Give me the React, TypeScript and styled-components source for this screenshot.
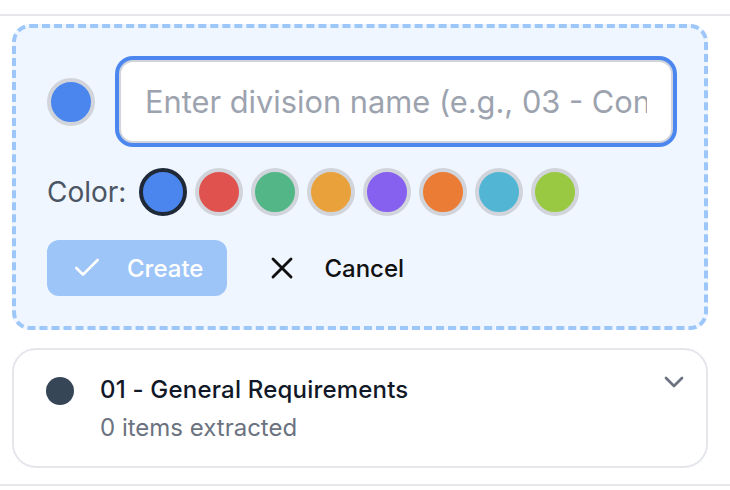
import React from "react";
import styled, { createGlobalStyle } from "styled-components";

const Global = createGlobalStyle`
  html, body { margin: 0; padding: 0; background: #ffffff; }
  body { font-family: Inter, "Noto Sans", "Liberation Sans", sans-serif; -webkit-font-smoothing: antialiased; }
  * { box-sizing: border-box; }
`;

const Page = styled.div`
  padding-top: 14px;
  width: 730px;
`;

const List = styled.div`
  border-top: 2px solid #e5e7eb;
  border-bottom: 2px solid #e5e7eb;
  padding: 8px 22px 16px 12px;
  display: flex;
  flex-direction: column;
  gap: 18px;
`;

const NewBox = styled.div`
  border: 4px dashed #9ec7f9;
  border-radius: 18px;
  background: #eff6ff;
  padding: 32px 31px 30px 31px;
  display: flex;
  flex-direction: column;
`;

const InputRow = styled.div`
  display: flex;
  align-items: center;
  gap: 24px;
`;

const Dot = styled.span<{ $color: string; $size: number; $ring?: string }>`
  flex: none;
  width: ${(p) => p.$size}px;
  height: ${(p) => p.$size}px;
  border-radius: 50%;
  background: ${(p) => p.$color};
  border: ${(p) => (p.$ring ? `4px solid ${p.$ring}` : "none")};
`;

const NameInput = styled.input`
  flex: 1;
  min-width: 0;
  height: 83px;
  border: 2px solid #d1d5db;
  border-radius: 14px;
  box-shadow: 0 0 0 4px #4b87ef;
  background: #ffffff;
  padding: 0 24px;
  font-family: inherit;
  font-size: 30.8px;
  color: #111827;
  outline: none;
  &::placeholder { color: #9ca3af; }
`;

const ColorRow = styled.div`
  display: flex;
  align-items: center;
  margin-top: 25px;
  gap: 8px;
`;

const ColorLabel = styled.span`
  font-size: 28px;
  color: #4b5563;
  margin-right: 5px;
  line-height: 48px;
`;

const Swatch = styled.button<{ $color: string; $selected: boolean }>`
  width: 48px;
  height: 48px;
  padding: 0;
  border-radius: 50%;
  background: ${(p) => p.$color};
  border: 4px solid ${(p) => (p.$selected ? "#1f2937" : "#d1d5db")};
  cursor: pointer;
`;

const ActionRow = styled.div`
  display: flex;
  align-items: center;
  gap: 13px;
  margin-top: 24px;
`;

const ActionButton = styled.button<{ $primary?: boolean }>`
  display: flex;
  align-items: center;
  gap: 24px;
  height: 56px;
  padding: 0 24px;
  border: none;
  border-radius: 12px;
  background: ${(p) => (p.$primary ? "#9dc5f7" : "transparent")};
  color: ${(p) => (p.$primary ? "#ffffff" : "#111111")};
  font-family: inherit;
  font-size: 24px;
  font-weight: 500;
  cursor: pointer;
`;

const Card = styled.div`
  border: 2px solid #e5e7eb;
  border-radius: 24px;
  background: #ffffff;
  height: 120px;
  padding: 24px 16px 0 32px;
  display: flex;
  align-items: flex-start;
  gap: 26px;
`;

const CardDot = styled.span`
  flex: none;
  width: 28px;
  height: 28px;
  border-radius: 50%;
  background: #364657;
  margin-top: 3px;
`;

const CardBody = styled.div`
  flex: 1;
  display: flex;
  flex-direction: column;
`;

const CardTitle = styled.div`
  font-size: 24px;
  line-height: 32px;
  font-weight: 500;
  letter-spacing: 0.2px;
  color: #111827;
`;

const CardSub = styled.div`
  font-size: 24px;
  line-height: 32px;
  color: #6b7280;
  margin-top: 6px;
`;

const Chevron = styled.span`
  display: flex;
  margin-top: -8px;
  color: #6b7280;
`;

const CheckIcon = ({ size }: { size: number }) => (
  <svg width={size} height={size} viewBox="0 0 24 24" fill="none" stroke="currentColor" strokeWidth={2} strokeLinecap="round" strokeLinejoin="round">
    <path d="M20 6 9 17l-5-5" />
  </svg>
);

const XIcon = ({ size }: { size: number }) => (
  <svg width={size} height={size} viewBox="0 0 24 24" fill="none" stroke="currentColor" strokeWidth={1.9} strokeLinecap="round" strokeLinejoin="round">
    <path d="M18 6 6 18M6 6l12 12" />
  </svg>
);

const ChevronDownIcon = ({ size }: { size: number }) => (
  <svg width={size} height={size} viewBox="0 0 24 24" fill="none" stroke="currentColor" strokeWidth={2} strokeLinecap="round" strokeLinejoin="round">
    <path d="m6 9 6 6 6-6" />
  </svg>
);

const COLORS = ["#4a86ee", "#e0524e", "#52b687", "#e9a23b", "#8660ee", "#ea7c36", "#52b5d3", "#99c942"];

export default function App() {
  const [selected, setSelected] = React.useState(0);
  return (
    <Page>
      <Global />
      <List>
        <NewBox>
          <InputRow>
            <Dot $color={COLORS[selected]} $size={48} $ring="#d1d5db" />
            <NameInput autoFocus placeholder="Enter division name (e.g., 03 - Concrete)" />
          </InputRow>
          <ColorRow>
            <ColorLabel>Color:</ColorLabel>
            {COLORS.map((c, i) => (
              <Swatch key={c} $color={c} $selected={i === selected} onClick={() => setSelected(i)} aria-label={c} />
            ))}
          </ColorRow>
          <ActionRow>
            <ActionButton $primary>
              <CheckIcon size={32} />
              Create
            </ActionButton>
            <ActionButton>
              <XIcon size={36} />
              Cancel
            </ActionButton>
          </ActionRow>
        </NewBox>
        <Card>
          <CardDot />
          <CardBody>
            <CardTitle>01 - General Requirements</CardTitle>
            <CardSub>0 items extracted</CardSub>
          </CardBody>
          <Chevron>
            <ChevronDownIcon size={32} />
          </Chevron>
        </Card>
      </List>
    </Page>
  );
}
